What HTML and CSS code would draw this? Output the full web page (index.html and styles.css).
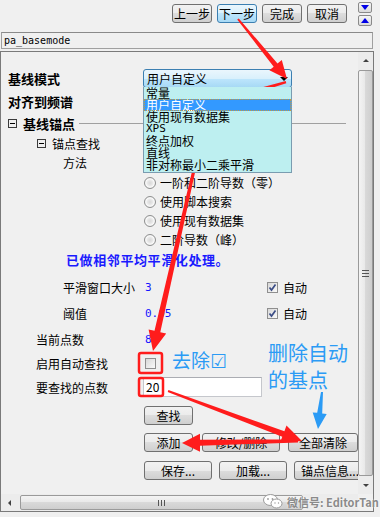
FILE: index.html
```html
<!DOCTYPE html>
<html lang="zh-CN">
<head>
    <meta charset="UTF-8">
    <title>pa_basemode</title>
    <link rel="stylesheet" href="styles.css">
</head>
<body>

<div class="toolbar">
    <div class="nav-buttons">
        <button class="btn nav">上一步</button>
        <button class="btn nav hot">下一步</button>
        <button class="btn nav">完成</button>
        <button class="btn nav">取消</button>
    </div>
    <div class="spin">
        <span class="spin-btn"><i class="tri down"></i></span>
        <span class="spin-btn"><i class="tri up"></i></span>
    </div>
</div>

<div class="path-field">pa_basemode</div>

<div class="panel">
    <div class="panel-main">
        <div class="viewport">
            <div class="row h24">
                <div class="label lv0 bold">基线模式</div>
                <div class="ctrl">
                    <div class="combo">
                        <span class="combo-text">用户自定义</span>
                        <i class="combo-arrow"></i>
                        <ul class="combo-list">
                            <li>常量</li>
                            <li class="sel">用户自定义</li>
                            <li>使用现有数据集</li>
                            <li class="mono">XPS</li>
                            <li>终点加权</li>
                            <li>直线</li>
                            <li>非对称最小二乘平滑</li>
                        </ul>
                    </div>
                </div>
            </div>
            <div class="row h22">
                <div class="label lv0 bold">对齐到频谱</div>
            </div>
            <div class="row h22 tree lv0">
                <span class="expander"></span>
                <span class="bold">基线锚点</span>
                <span class="tree-line"></span>
            </div>
            <div class="row h18 tree lv1">
                <span class="expander"></span>
                <span>锚点查找</span>
            </div>
            <div class="row h21">
                <div class="label lv2">方法</div>
            </div>
            <div class="row h19">
                <div class="label"></div>
                <div class="ctrl"><span class="radio"></span>一阶和二阶导数（零）</div>
            </div>
            <div class="row h19">
                <div class="label"></div>
                <div class="ctrl"><span class="radio"></span>使用脚本搜索</div>
            </div>
            <div class="row h19">
                <div class="label"></div>
                <div class="ctrl"><span class="radio"></span>使用现有数据集</div>
            </div>
            <div class="row h19">
                <div class="label"></div>
                <div class="ctrl"><span class="radio"></span>二阶导数（峰）</div>
            </div>
            <div class="row h20 notice">已做相邻平均平滑化处理。</div>

            <div class="row h26 mt5">
                <div class="label lv2">平滑窗口大小</div>
                <div class="ctrl">
                    <span class="val">3</span>
                    <span class="check on"><svg width="9" height="9" viewBox="0 0 9 9"><polyline points="1.5,4.5 3.5,7 7.5,1.5" fill="none" stroke="#3b4d86" stroke-width="1.7"/></svg></span>
                    <span class="check-text">自动</span>
                </div>
            </div>
            <div class="row h26">
                <div class="label lv2">阈值</div>
                <div class="ctrl">
                    <span class="val">0.05</span>
                    <span class="check on"><svg width="9" height="9" viewBox="0 0 9 9"><polyline points="1.5,4.5 3.5,7 7.5,1.5" fill="none" stroke="#3b4d86" stroke-width="1.7"/></svg></span>
                    <span class="check-text">自动</span>
                </div>
            </div>
            <div class="row h26">
                <div class="label lv1">当前点数</div>
                <div class="ctrl"><span class="val">8</span></div>
            </div>
            <div class="row h23">
                <div class="label lv1">启用自动查找</div>
                <div class="ctrl"><span class="check solo"></span></div>
            </div>
            <div class="row h24">
                <div class="label lv1">要查找的点数</div>
                <div class="ctrl"><div class="input">20</div></div>
            </div>

            <div class="btn-row first">
                <button class="btn w49">查找</button>
            </div>
            <div class="btn-row second">
                <button class="btn w49">添加</button>
                <button class="btn w78">修改/删除</button>
                <button class="btn w70">全部清除</button>
            </div>
            <div class="btn-row third">
                <button class="btn w68">保存...</button>
                <button class="btn w68">加载...</button>
                <button class="btn w72">锚点信息...</button>
            </div>
        </div>
        <div class="vscroll">
            <span class="sb-arrow"><i class="mini up"></i></span>
            <span class="thumb v"></span>
            <span class="sb-arrow"><i class="mini down"></i></span>
        </div>
    </div>
    <div class="hscroll-row">
        <div class="hscroll">
            <span class="sb-arrow h"><i class="mini left"></i></span>
            <span class="thumb h"></span>
        </div>
        <div class="corner"></div>
    </div>
</div>

<!-- annotations drawn on top of the screenshot -->
<svg class="marks" width="380" height="517" viewBox="0 0 380 517">
    <g fill="#ff1c1c">
        <polygon points="237.2,19.6 273.7,66.7 269.4,70.2 287,79 281.8,60.0 277.5,63.5 238.8,18.4"/>
        <polygon points="285.7,80.9 227.6,96.5 226.0,91.2 211,104 230.5,106.6 229.0,101.3 286.3,83.2"/>
        <polygon points="207.0,107.8 154.5,330.8 148.6,329.5 153,351 166.2,333.5 160.3,332.2 209.0,108.2"/>
        <polygon points="167.7,391.9 282.3,436.8 280.2,442.4 302,441 286.5,425.6 284.4,431.2 168.4,390.1"/>
        <polygon points="298,439.5 200,439.7 200,433.7 182,443 200,451.7 200,445.7 298,442.5"/>
    </g>
    <g fill="none" stroke="#ff1c1c" stroke-width="2.5">
        <rect x="139" y="353" width="23" height="20" rx="2"/>
        <rect x="139" y="378" width="24" height="18" rx="2"/>
    </g>
    <polygon fill="#2b9bf5" points="321,391.9 317.2,412.8 312.7,412.4 318,429 326.7,413.9 322.2,413.4 323,392.1"/>
</svg>

<div class="note note-a">去除☑</div>
<div class="note note-b">删除自动<br>的基点</div>

<div class="watermark">
    <svg width="20" height="15" viewBox="0 0 20 15">
        <ellipse cx="7.5" cy="6" rx="7" ry="5.5" fill="#fff" stroke="#9a9a9a"/>
        <ellipse cx="13.5" cy="9.5" rx="5.5" ry="4.5" fill="#fff" stroke="#9a9a9a"/>
        <circle cx="5" cy="5" r="0.9" fill="#9a9a9a"/>
        <circle cx="9.5" cy="5" r="0.9" fill="#9a9a9a"/>
        <circle cx="12" cy="9" r="0.7" fill="#9a9a9a"/>
        <circle cx="15.5" cy="9" r="0.7" fill="#9a9a9a"/>
    </svg>
    <span>微信号: EditorTan</span>
</div>

</body>
</html>
```

FILE: styles.css
```css
body {
    margin: 0;
    width: 380px;
    height: 517px;
    overflow: hidden;
    position: relative;
    background-color: #f0f0f0;
    font-family: "Noto Sans CJK SC", "Noto Sans", sans-serif;
    font-size: 12px;
    color: #000;
}
.bold {
    font-weight: bold;
    font-size: 13px;
}

/* top toolbar */
.toolbar {
    display: flex;
    justify-content: flex-end;
    align-items: flex-start;
    height: 32px;
    box-sizing: border-box;
    padding: 2px 8px 0 0;
}
.nav-buttons {
    display: flex;
    gap: 5px;
    margin-top: 2px;
}
.btn {
    font: inherit;
    font-size: 12px;
    box-sizing: border-box;
    height: 19px;
    padding: 0;
    flex: none;
    border: 1px solid #707070;
    border-radius: 3px;
    background: linear-gradient(#f2f2f2 0%, #ebebeb 50%, #dddddd 50%, #cfcfcf 100%);
    color: #000;
    line-height: 16px;
    white-space: nowrap;
}
.nav {
    width: 40px;
}
.btn.hot {
    border-color: #3c7fb1;
    background: linear-gradient(#eaf6fd 0%, #d9f0fc 50%, #bee6fd 50%, #a7d9f5 100%);
}
.spin {
    display: flex;
    flex-direction: column;
    gap: 2px;
    margin-left: 11px;
    width: 14px;
}
.spin-btn {
    height: 11px;
    box-sizing: border-box;
    border: 1px solid #8a8a8a;
    border-radius: 2px;
    background: linear-gradient(#f6f6f6, #dadada);
    display: flex;
    align-items: center;
    justify-content: center;
}
.tri {
    width: 0;
    height: 0;
    border-left: 4px solid transparent;
    border-right: 4px solid transparent;
}
.tri.down {
    border-top: 5px solid #0000e6;
}
.tri.up {
    border-bottom: 5px solid #0000e6;
}

.path-field {
    margin-left: 1px;
    width: 372px;
    height: 17px;
    box-sizing: border-box;
    border: 1px solid #a0a0a0;
    border-top-color: #8a8a8a;
    padding-left: 2px;
    font-family: "DejaVu Sans Mono", monospace;
    font-size: 10px;
    line-height: 15px;
}

/* main panel */
.panel {
    margin-top: 2px;
    width: 374px;
    height: 461px;
    box-sizing: border-box;
    border: 1px solid #7a7a7a;
    display: flex;
    flex-direction: column;
}
.panel-main {
    display: flex;
    flex: 1;
    min-height: 0;
}
.viewport {
    flex: 1;
    min-width: 0;
    overflow: hidden;
    padding-top: 14px;
}
.row {
    display: flex;
    align-items: center;
    white-space: nowrap;
}
.h18 { height: 18px; }
.h19 { height: 19px; }
.h20 { height: 20px; }
.h21 { height: 21px; }
.h22 { height: 22px; }
.h23 { height: 23px; }
.h24 { height: 24px; }
.h26 { height: 26px; }
.mt5 { margin-top: 5px; }

.label {
    width: 142px;
    flex: none;
    box-sizing: border-box;
}
.label.lv0 { padding-left: 7px; }
.label.lv1 { padding-left: 35px; }
.label.lv2 { padding-left: 62px; }
.ctrl {
    display: flex;
    align-items: center;
}

/* tree rows */
.tree {
    padding-right: 12px;
}
.tree.lv0 { padding-left: 7px; }
.tree.lv1 { padding-left: 36px; }
.expander {
    position: relative;
    width: 9px;
    height: 9px;
    box-sizing: border-box;
    border: 1px solid #3a3a3a;
    margin-right: 6px;
    flex: none;
}
.expander::after {
    content: "";
    position: absolute;
    left: 1px;
    top: 3px;
    width: 5px;
    height: 1px;
    background: #000;
}
.tree-line {
    flex: 1;
    height: 1px;
    background: #a0a0a0;
    margin-left: 4px;
}

/* combo box */
.combo {
    position: relative;
    width: 149px;
    height: 19px;
    box-sizing: border-box;
    border: 1px solid #3c7fb1;
    border-radius: 3px;
    background: linear-gradient(#eaf6fd 0%, #d9f0fc 50%, #bee6fd 50%, #a7d9f5 100%);
    display: flex;
    align-items: center;
    padding-left: 3px;
}
.combo-text {
    flex: 1;
}
.combo-arrow {
    width: 0;
    height: 0;
    border-left: 4px solid transparent;
    border-right: 4px solid transparent;
    border-top: 4px solid #000;
    margin-right: 3px;
    margin-top: 2px;
}
.combo-list {
    position: absolute;
    left: -1px;
    top: 100%;
    width: 149px;
    margin: 0;
    padding: 0 0 1px;
    list-style: none;
    box-sizing: border-box;
    border: 1px solid #7a9cb0;
    border-top: none;
    background: #bdeff0;
    z-index: 2;
}
.combo-list li {
    height: 12px;
    line-height: 12px;
    padding-left: 2px;
    box-sizing: border-box;
}
.combo-list li.sel {
    background: #3399ff;
    color: #fff;
    outline: 1px dotted #c89a3a;
    outline-offset: -1px;
}
.combo-list li.mono {
    font-family: "DejaVu Sans Mono", monospace;
    font-size: 11px;
}

/* radio and check */
.radio {
    width: 12px;
    height: 12px;
    box-sizing: border-box;
    border: 1px solid #8e8f8f;
    border-radius: 50%;
    background: radial-gradient(circle, #d8d8d8 0, #e6e6e6 35%, #fafafa 60%, #d0d0d0 100%);
    margin: 0 4px 0 1px;
    flex: none;
}
.val {
    width: 124px;
    flex: none;
    box-sizing: border-box;
    padding-left: 2px;
    color: #1414ff;
    font-family: "DejaVu Sans Mono", monospace;
    font-size: 11px;
}
.check {
    width: 11px;
    height: 11px;
    box-sizing: border-box;
    border: 1px solid #8f8f8f;
    background: linear-gradient(135deg, #d8d8d8, #fafafa);
    display: flex;
    align-items: center;
    justify-content: center;
    flex: none;
}
.check.solo {
    margin-left: 2px;
}
.check-text {
    margin-left: 5px;
}
.input {
    width: 119px;
    height: 20px;
    box-sizing: border-box;
    border: 1px solid #c5c7cc;
    border-top-color: #abadb3;
    background: #fff;
    padding-left: 2px;
    line-height: 18px;
}

.notice {
    padding-left: 65px;
    color: #1a1aff;
    font-weight: bold;
    font-size: 13px;
    letter-spacing: 0.6px;
}

/* button rows */
.btn-row {
    display: flex;
    padding-left: 143px;
    white-space: nowrap;
}
.btn-row.first { margin-top: 7px; }
.btn-row.second { margin-top: 8px; gap: 9px; }
.btn-row.third { margin-top: 9px; gap: 7px; }
.btn-row.second .w78 { margin-right: -1px; }
.w49 { width: 49px; }
.w68 { width: 68px; }
.w70 { width: 70px; }
.w72 { width: 72px; }
.w78 { width: 78px; }

/* scroll bars */
.vscroll {
    width: 15px;
    flex: none;
    display: flex;
    flex-direction: column;
    background: #ececec;
}
.sb-arrow {
    height: 17px;
    flex: none;
    display: flex;
    align-items: center;
    justify-content: center;
}
.sb-arrow.h {
    width: 17px;
    height: auto;
}
.mini {
    width: 0;
    height: 0;
}
.mini.up {
    border-left: 3px solid transparent;
    border-right: 3px solid transparent;
    border-bottom: 3px solid #404040;
}
.mini.down {
    border-left: 3px solid transparent;
    border-right: 3px solid transparent;
    border-top: 3px solid #404040;
}
.mini.left {
    border-top: 3px solid transparent;
    border-bottom: 3px solid transparent;
    border-right: 3px solid #404040;
}
.thumb {
    position: relative;
    box-sizing: border-box;
    border: 1px solid #9a9a9a;
    border-radius: 2px;
}
.thumb.v {
    flex: 1;
    margin: 1px 0;
    background: linear-gradient(to right, #f4f4f4, #e8e8e8 50%, #d9d9d9 50%, #cecece);
}
.thumb.h {
    width: 283px;
    height: 15px;
    margin-left: 2px;
    background: linear-gradient(#f4f4f4, #e8e8e8 50%, #d9d9d9 50%, #cecece);
}
.thumb::after {
    content: "";
    position: absolute;
    left: 50%;
    top: 50%;
}
.thumb.v::after {
    width: 7px;
    height: 7px;
    margin: -3px 0 0 -4px;
    background: repeating-linear-gradient(#555 0 1px, transparent 1px 3px);
}
.thumb.h::after {
    width: 7px;
    height: 6px;
    margin: -3px 0 0 -4px;
    background: repeating-linear-gradient(to right, #555 0 1px, transparent 1px 3px);
}
.hscroll-row {
    display: flex;
    height: 17px;
    flex: none;
}
.hscroll {
    flex: 1;
    display: flex;
    align-items: center;
    background: #ececec;
}
.corner {
    width: 15px;
    background: #f0f0f0;
}

/* annotations */
.marks {
    position: absolute;
    left: 0;
    top: 0;
    pointer-events: none;
}
.note {
    position: absolute;
    color: #2b9bf5;
    font-family: "Noto Sans CJK SC", "DejaVu Sans", sans-serif;
}
.note-a {
    left: 172px;
    top: 350px;
    font-size: 19px;
    line-height: 20px;
}
.note-b {
    left: 268px;
    top: 339px;
    font-size: 20px;
    line-height: 27px;
}
.watermark {
    position: absolute;
    left: 263px;
    top: 494px;
    display: flex;
    align-items: center;
    gap: 4px;
    height: 15px;
    color: #8a8a8a;
    font-size: 11px;
    font-weight: bold;
    text-shadow: 0 0 2px #fff;
}
```
